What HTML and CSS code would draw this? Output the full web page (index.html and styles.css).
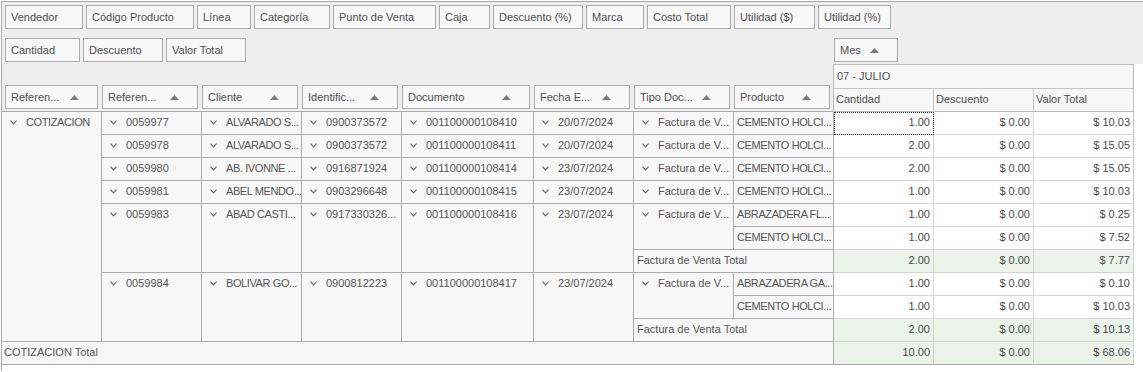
FILE: index.html
```html
<!DOCTYPE html>
<html lang="es">
<head>
<meta charset="utf-8">
<title>Pivot</title>
<link rel="stylesheet" href="styles.css">
</head>
<body>
<div class="pivot">
  <div class="filters">
    <div class="frow">
      <span class="fld w78">Vendedor</span>
      <span class="fld w108">Código Producto</span>
      <span class="fld w54">Línea</span>
      <span class="fld w76">Categoría</span>
      <span class="fld w103">Punto de Venta</span>
      <span class="fld w51">Caja</span>
      <span class="fld w90">Descuento (%)</span>
      <span class="fld w58">Marca</span>
      <span class="fld w84">Costo Total</span>
      <span class="fld w81">Utilidad ($)</span>
      <span class="fld w73">Utilidad (%)</span>
    </div>
    <div class="frow2">
      <div class="dfields">
        <span class="fld w75">Cantidad</span>
        <span class="fld w80">Descuento</span>
        <span class="fld w80">Valor Total</span>
      </div>
      <div class="cfields">
        <span class="hbtn mes"><span class="ht">Mes</span><svg class="tri" width="9" height="5" viewBox="0 0 9 5"><path d="M0 5 4.5 0 9 5Z" fill="#7b7b7b"/></svg></span>
      </div>
    </div>
  </div>

  <div class="grid">
    <div class="rhead">
      <div class="rh first"><span class="hbtn"><span class="ht">Referen...</span><svg class="tri" width="9" height="5" viewBox="0 0 9 5"><path d="M0 5 4.5 0 9 5Z" fill="#7b7b7b"/></svg></span></div>
      <div class="rh"><span class="hbtn"><span class="ht">Referen...</span><svg class="tri" width="9" height="5" viewBox="0 0 9 5"><path d="M0 5 4.5 0 9 5Z" fill="#7b7b7b"/></svg></span></div>
      <div class="rh"><span class="hbtn"><span class="ht">Cliente</span><svg class="tri" width="9" height="5" viewBox="0 0 9 5"><path d="M0 5 4.5 0 9 5Z" fill="#7b7b7b"/></svg></span></div>
      <div class="rh"><span class="hbtn"><span class="ht">Identific...</span><svg class="tri" width="9" height="5" viewBox="0 0 9 5"><path d="M0 5 4.5 0 9 5Z" fill="#7b7b7b"/></svg></span></div>
      <div class="rh"><span class="hbtn"><span class="ht">Documento</span><svg class="tri" width="9" height="5" viewBox="0 0 9 5"><path d="M0 5 4.5 0 9 5Z" fill="#7b7b7b"/></svg></span></div>
      <div class="rh"><span class="hbtn"><span class="ht">Fecha E...</span><svg class="tri" width="9" height="5" viewBox="0 0 9 5"><path d="M0 5 4.5 0 9 5Z" fill="#7b7b7b"/></svg></span></div>
      <div class="rh"><span class="hbtn"><span class="ht">Tipo Doc...</span><svg class="tri" width="9" height="5" viewBox="0 0 9 5"><path d="M0 5 4.5 0 9 5Z" fill="#7b7b7b"/></svg></span></div>
      <div class="rh last"><span class="hbtn"><span class="ht">Producto</span><svg class="tri" width="9" height="5" viewBox="0 0 9 5"><path d="M0 5 4.5 0 9 5Z" fill="#7b7b7b"/></svg></span></div>
    </div>
    <div class="julio">07 - JULIO</div>
    <div class="dh">Cantidad</div>
    <div class="dh">Descuento</div>
    <div class="dh lastc">Valor Total</div>

    <!-- row 1 -->
    <div class="c rs10 up"><svg class="chev" width="7" height="5" viewBox="0 0 7 5"><path d="M.5 .6 3.5 3.8 6.5 .6" fill="none" stroke="#6a6a6a" stroke-width="1.2"/></svg>COTIZACION</div>
    <div class="c"><svg class="chev" width="7" height="5" viewBox="0 0 7 5"><path d="M.5 .6 3.5 3.8 6.5 .6" fill="none" stroke="#6a6a6a" stroke-width="1.2"/></svg>0059977</div>
    <div class="c up"><svg class="chev" width="7" height="5" viewBox="0 0 7 5"><path d="M.5 .6 3.5 3.8 6.5 .6" fill="none" stroke="#6a6a6a" stroke-width="1.2"/></svg>ALVARADO S...</div>
    <div class="c"><svg class="chev" width="7" height="5" viewBox="0 0 7 5"><path d="M.5 .6 3.5 3.8 6.5 .6" fill="none" stroke="#6a6a6a" stroke-width="1.2"/></svg>0900373572</div>
    <div class="c"><svg class="chev" width="7" height="5" viewBox="0 0 7 5"><path d="M.5 .6 3.5 3.8 6.5 .6" fill="none" stroke="#6a6a6a" stroke-width="1.2"/></svg>001100000108410</div>
    <div class="c"><svg class="chev" width="7" height="5" viewBox="0 0 7 5"><path d="M.5 .6 3.5 3.8 6.5 .6" fill="none" stroke="#6a6a6a" stroke-width="1.2"/></svg>20/07/2024</div>
    <div class="c"><svg class="chev" width="7" height="5" viewBox="0 0 7 5"><path d="M.5 .6 3.5 3.8 6.5 .6" fill="none" stroke="#6a6a6a" stroke-width="1.2"/></svg>Factura de V...</div>
    <div class="c p up">CEMENTO HOLCI...</div>
    <div class="d focus">1.00</div><div class="d">$ 0.00</div><div class="d lastc">$ 10.03</div>

    <!-- row 2 -->
    <div class="c"><svg class="chev" width="7" height="5" viewBox="0 0 7 5"><path d="M.5 .6 3.5 3.8 6.5 .6" fill="none" stroke="#6a6a6a" stroke-width="1.2"/></svg>0059978</div>
    <div class="c up"><svg class="chev" width="7" height="5" viewBox="0 0 7 5"><path d="M.5 .6 3.5 3.8 6.5 .6" fill="none" stroke="#6a6a6a" stroke-width="1.2"/></svg>ALVARADO S...</div>
    <div class="c"><svg class="chev" width="7" height="5" viewBox="0 0 7 5"><path d="M.5 .6 3.5 3.8 6.5 .6" fill="none" stroke="#6a6a6a" stroke-width="1.2"/></svg>0900373572</div>
    <div class="c"><svg class="chev" width="7" height="5" viewBox="0 0 7 5"><path d="M.5 .6 3.5 3.8 6.5 .6" fill="none" stroke="#6a6a6a" stroke-width="1.2"/></svg>001100000108411</div>
    <div class="c"><svg class="chev" width="7" height="5" viewBox="0 0 7 5"><path d="M.5 .6 3.5 3.8 6.5 .6" fill="none" stroke="#6a6a6a" stroke-width="1.2"/></svg>20/07/2024</div>
    <div class="c"><svg class="chev" width="7" height="5" viewBox="0 0 7 5"><path d="M.5 .6 3.5 3.8 6.5 .6" fill="none" stroke="#6a6a6a" stroke-width="1.2"/></svg>Factura de V...</div>
    <div class="c p up">CEMENTO HOLCI...</div>
    <div class="d">2.00</div><div class="d">$ 0.00</div><div class="d lastc">$ 15.05</div>

    <!-- row 3 -->
    <div class="c"><svg class="chev" width="7" height="5" viewBox="0 0 7 5"><path d="M.5 .6 3.5 3.8 6.5 .6" fill="none" stroke="#6a6a6a" stroke-width="1.2"/></svg>0059980</div>
    <div class="c up"><svg class="chev" width="7" height="5" viewBox="0 0 7 5"><path d="M.5 .6 3.5 3.8 6.5 .6" fill="none" stroke="#6a6a6a" stroke-width="1.2"/></svg>AB. IVONNE ...</div>
    <div class="c"><svg class="chev" width="7" height="5" viewBox="0 0 7 5"><path d="M.5 .6 3.5 3.8 6.5 .6" fill="none" stroke="#6a6a6a" stroke-width="1.2"/></svg>0916871924</div>
    <div class="c"><svg class="chev" width="7" height="5" viewBox="0 0 7 5"><path d="M.5 .6 3.5 3.8 6.5 .6" fill="none" stroke="#6a6a6a" stroke-width="1.2"/></svg>001100000108414</div>
    <div class="c"><svg class="chev" width="7" height="5" viewBox="0 0 7 5"><path d="M.5 .6 3.5 3.8 6.5 .6" fill="none" stroke="#6a6a6a" stroke-width="1.2"/></svg>23/07/2024</div>
    <div class="c"><svg class="chev" width="7" height="5" viewBox="0 0 7 5"><path d="M.5 .6 3.5 3.8 6.5 .6" fill="none" stroke="#6a6a6a" stroke-width="1.2"/></svg>Factura de V...</div>
    <div class="c p up">CEMENTO HOLCI...</div>
    <div class="d">2.00</div><div class="d">$ 0.00</div><div class="d lastc">$ 15.05</div>

    <!-- row 4 -->
    <div class="c"><svg class="chev" width="7" height="5" viewBox="0 0 7 5"><path d="M.5 .6 3.5 3.8 6.5 .6" fill="none" stroke="#6a6a6a" stroke-width="1.2"/></svg>0059981</div>
    <div class="c up"><svg class="chev" width="7" height="5" viewBox="0 0 7 5"><path d="M.5 .6 3.5 3.8 6.5 .6" fill="none" stroke="#6a6a6a" stroke-width="1.2"/></svg>ABEL MENDO...</div>
    <div class="c"><svg class="chev" width="7" height="5" viewBox="0 0 7 5"><path d="M.5 .6 3.5 3.8 6.5 .6" fill="none" stroke="#6a6a6a" stroke-width="1.2"/></svg>0903296648</div>
    <div class="c"><svg class="chev" width="7" height="5" viewBox="0 0 7 5"><path d="M.5 .6 3.5 3.8 6.5 .6" fill="none" stroke="#6a6a6a" stroke-width="1.2"/></svg>001100000108415</div>
    <div class="c"><svg class="chev" width="7" height="5" viewBox="0 0 7 5"><path d="M.5 .6 3.5 3.8 6.5 .6" fill="none" stroke="#6a6a6a" stroke-width="1.2"/></svg>23/07/2024</div>
    <div class="c"><svg class="chev" width="7" height="5" viewBox="0 0 7 5"><path d="M.5 .6 3.5 3.8 6.5 .6" fill="none" stroke="#6a6a6a" stroke-width="1.2"/></svg>Factura de V...</div>
    <div class="c p up">CEMENTO HOLCI...</div>
    <div class="d">1.00</div><div class="d">$ 0.00</div><div class="d lastc">$ 10.03</div>

    <!-- row 5 -->
    <div class="c rs3"><svg class="chev" width="7" height="5" viewBox="0 0 7 5"><path d="M.5 .6 3.5 3.8 6.5 .6" fill="none" stroke="#6a6a6a" stroke-width="1.2"/></svg>0059983</div>
    <div class="c rs3 up"><svg class="chev" width="7" height="5" viewBox="0 0 7 5"><path d="M.5 .6 3.5 3.8 6.5 .6" fill="none" stroke="#6a6a6a" stroke-width="1.2"/></svg>ABAD CASTI...</div>
    <div class="c rs3"><svg class="chev" width="7" height="5" viewBox="0 0 7 5"><path d="M.5 .6 3.5 3.8 6.5 .6" fill="none" stroke="#6a6a6a" stroke-width="1.2"/></svg>0917330326...</div>
    <div class="c rs3"><svg class="chev" width="7" height="5" viewBox="0 0 7 5"><path d="M.5 .6 3.5 3.8 6.5 .6" fill="none" stroke="#6a6a6a" stroke-width="1.2"/></svg>001100000108416</div>
    <div class="c rs3"><svg class="chev" width="7" height="5" viewBox="0 0 7 5"><path d="M.5 .6 3.5 3.8 6.5 .6" fill="none" stroke="#6a6a6a" stroke-width="1.2"/></svg>23/07/2024</div>
    <div class="c rs2"><svg class="chev" width="7" height="5" viewBox="0 0 7 5"><path d="M.5 .6 3.5 3.8 6.5 .6" fill="none" stroke="#6a6a6a" stroke-width="1.2"/></svg>Factura de V...</div>
    <div class="c p up">ABRAZADERA FL...</div>
    <div class="d">1.00</div><div class="d">$ 0.00</div><div class="d lastc">$ 0.25</div>

    <!-- row 6 -->
    <div class="c p up">CEMENTO HOLCI...</div>
    <div class="d">1.00</div><div class="d">$ 0.00</div><div class="d lastc">$ 7.52</div>

    <!-- row 7 -->
    <div class="c cs2">Factura de Venta Total</div>
    <div class="d tot">2.00</div><div class="d tot">$ 0.00</div><div class="d tot lastc">$ 7.77</div>

    <!-- row 8 -->
    <div class="c rs3"><svg class="chev" width="7" height="5" viewBox="0 0 7 5"><path d="M.5 .6 3.5 3.8 6.5 .6" fill="none" stroke="#6a6a6a" stroke-width="1.2"/></svg>0059984</div>
    <div class="c rs3 up"><svg class="chev" width="7" height="5" viewBox="0 0 7 5"><path d="M.5 .6 3.5 3.8 6.5 .6" fill="none" stroke="#6a6a6a" stroke-width="1.2"/></svg>BOLIVAR GO...</div>
    <div class="c rs3"><svg class="chev" width="7" height="5" viewBox="0 0 7 5"><path d="M.5 .6 3.5 3.8 6.5 .6" fill="none" stroke="#6a6a6a" stroke-width="1.2"/></svg>0900812223</div>
    <div class="c rs3"><svg class="chev" width="7" height="5" viewBox="0 0 7 5"><path d="M.5 .6 3.5 3.8 6.5 .6" fill="none" stroke="#6a6a6a" stroke-width="1.2"/></svg>001100000108417</div>
    <div class="c rs3"><svg class="chev" width="7" height="5" viewBox="0 0 7 5"><path d="M.5 .6 3.5 3.8 6.5 .6" fill="none" stroke="#6a6a6a" stroke-width="1.2"/></svg>23/07/2024</div>
    <div class="c rs2"><svg class="chev" width="7" height="5" viewBox="0 0 7 5"><path d="M.5 .6 3.5 3.8 6.5 .6" fill="none" stroke="#6a6a6a" stroke-width="1.2"/></svg>Factura de V...</div>
    <div class="c p up">ABRAZADERA GA...</div>
    <div class="d">1.00</div><div class="d">$ 0.00</div><div class="d lastc">$ 0.10</div>

    <!-- row 9 -->
    <div class="c p up">CEMENTO HOLCI...</div>
    <div class="d">1.00</div><div class="d">$ 0.00</div><div class="d lastc">$ 10.03</div>

    <!-- row 10 -->
    <div class="c cs2">Factura de Venta Total</div>
    <div class="d tot">2.00</div><div class="d tot">$ 0.00</div><div class="d tot lastc">$ 10.13</div>

    <!-- row 11 -->
    <div class="c cs8 gt">COTIZACION Total</div>
    <div class="d tot gt">10.00</div><div class="d tot gt">$ 0.00</div><div class="d tot gt lastc">$ 68.06</div>
  </div>
</div>
</body>
</html>
```

FILE: styles.css
```css
html, body {
  margin: 0;
  padding: 0;
  background: #ffffff;
}

body {
  font-family: "Liberation Sans", Arial, sans-serif;
  font-size: 11px;
  color: #505050;
}

.pivot {
  margin: 1px 0 0 1px;
  border-top: 1px solid #a9a9a9;
  border-left: 1px solid #a9a9a9;
  height: 370px;
  box-sizing: border-box;
  background: #ffffff;
}

/* ---------- filter / field area ---------- */
.filters {
  background: #efefef;
  padding: 3px 0 2px 3px;
}

.frow {
  display: flex;
  gap: 3px;
  height: 24px;
}

.frow2 {
  display: grid;
  grid-template-columns: 829px auto;
  margin-top: 9px;
  height: 24px;
}

.dfields {
  display: flex;
  gap: 3px;
}

.cfields {
  display: flex;
}

.fld {
  display: flex;
  align-items: center;
  flex: none;
  height: 24px;
  box-sizing: border-box;
  border: 1px solid #adadad;
  background: #f8f8f8;
  padding: 0 0 0 5px;
  white-space: nowrap;
  overflow: hidden;
  color: #4e4e4e;
}

.w51 { width: 51px; }
.w54 { width: 54px; }
.w58 { width: 58px; }
.w73 { width: 73px; }
.w75 { width: 75px; }
.w76 { width: 76px; }
.w78 { width: 78px; }
.w80 { width: 80px; }
.w81 { width: 81px; }
.w84 { width: 84px; }
.w90 { width: 90px; }
.w103 { width: 103px; }
.w108 { width: 108px; }

.hbtn {
  display: flex;
  align-items: center;
  height: 24px;
  box-sizing: border-box;
  border: 1px solid #adadad;
  background: #f8f8f8;
  padding: 0 18px 0 5px;
  white-space: nowrap;
  color: #4e4e4e;
  width: 100%;
}

.hbtn .ht {
  flex: 1;
  overflow: hidden;
}

.tri {
  flex: none;
  display: block;
}

.mes {
  width: 64px;
}

/* ---------- pivot grid ---------- */
.grid {
  display: grid;
  grid-template-columns: repeat(4, 100px) 132px repeat(6, 100px);
  grid-template-rows: 25px 23px;
  grid-auto-rows: 23px;
  width: 1132px;
}

.rhead {
  grid-column: span 8;
  grid-row: span 2;
  background: #efefef;
  border-right: 1px solid #b9b9b9;
  border-bottom: 1px solid #a9a9a9;
  box-sizing: border-box;
  display: grid;
  grid-template-columns: repeat(4, 100px) 132px 100px 100px 99px;
  align-items: end;
  padding-bottom: 2px;
}

.rh {
  padding-right: 4px;
  display: flex;
}

.rh.first {
  padding-left: 3px;
}

.rh.last {
  padding-right: 3px;
}

.julio {
  grid-column: span 3;
  border-top: 1px solid #bdbdbd;
  border-right: 1px solid #bdbdbd;
  border-bottom: 1px solid #c6c6c6;
  background: #f7f7f7;
  box-sizing: border-box;
  padding-left: 3px;
  line-height: 22px;
  color: #4e4e4e;
}

.dh {
  border-right: 1px solid #c6c6c6;
  border-bottom: 1px solid #b9b9b9;
  background: #f7f7f7;
  box-sizing: border-box;
  padding-left: 2px;
  line-height: 21px;
  color: #4e4e4e;
}

.c {
  background: #f7f7f7;
  border-right: 1px solid #ababab;
  border-bottom: 1px solid #ababab;
  box-sizing: border-box;
  padding-left: 8px;
  line-height: 21px;
  white-space: nowrap;
  overflow: hidden;
  color: #555555;
}

.c.up {
  letter-spacing: -0.4px;
}

.c.p,
.c.cs2 {
  padding-left: 3px;
}

.c.cs8 {
  padding-left: 2px;
}

.chev {
  display: inline-block;
  vertical-align: middle;
  margin: -2px 9px 0 0;
}

.rs2 { grid-row: span 2; }
.rs3 { grid-row: span 3; }
.rs10 { grid-row: span 10; }
.cs2 { grid-column: span 2; }
.cs8 { grid-column: span 8; }

.d {
  background: #ffffff;
  border-right: 1px solid #d8d8d8;
  border-bottom: 1px solid #d8d8d8;
  box-sizing: border-box;
  text-align: right;
  padding-right: 3px;
  line-height: 21px;
  color: #4a4a4a;
  white-space: nowrap;
}

.d.lastc,
.dh.lastc {
  border-right-color: #c4c4c4;
}

.d.tot {
  background: #ebf3ea;
  border-color: #cfd6ce;
}

.d.gt,
.c.gt {
  border-bottom-color: #a9a9a9;
}

.d.focus {
  outline: 1px dotted #222;
  outline-offset: -1px;
}
```
